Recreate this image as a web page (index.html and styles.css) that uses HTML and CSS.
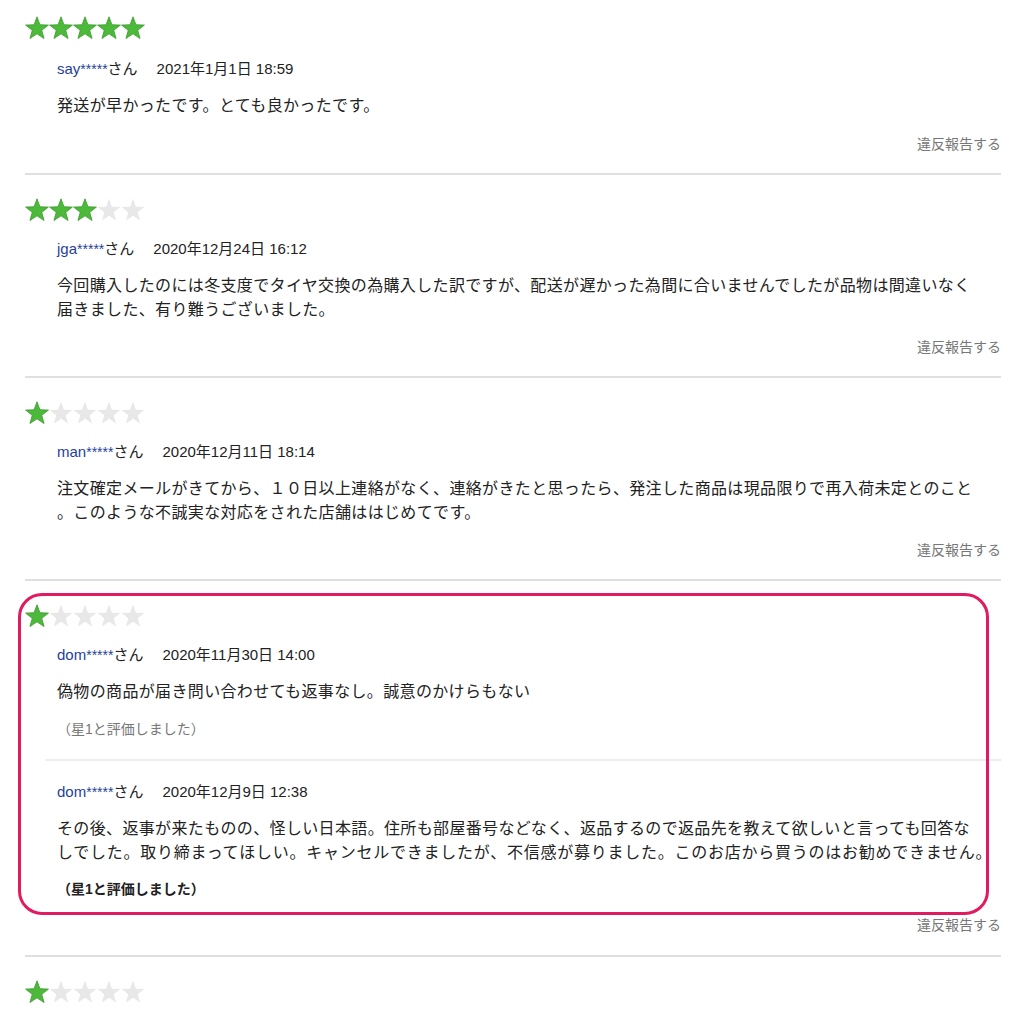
FILE: index.html
```html
<!DOCTYPE html>
<html lang="ja">
<head>
    <meta charset="UTF-8">
    <meta name="viewport" content="width=device-width, initial-scale=1.0">
    <title>レビュー</title>
    <link rel="stylesheet" href="styles.css">
</head>
<body>
    <svg class="sprite" xmlns="http://www.w3.org/2000/svg">
        <symbol id="star" viewBox="0 0 24 23">
            <polygon points="12,0.8 14.94,8.75 23.41,9.09 16.76,14.35 19.05,22.51 12,17.8 4.95,22.51 7.24,14.35 0.59,9.09 9.06,8.75"/>
        </symbol>
    </svg>

    <div class="reviews">
        <!-- review 1 -->
        <div class="review first">
            <div class="stars">
                <svg class="star on"><use href="#star"/></svg>
                <svg class="star on"><use href="#star"/></svg>
                <svg class="star on"><use href="#star"/></svg>
                <svg class="star on"><use href="#star"/></svg>
                <svg class="star on"><use href="#star"/></svg>
            </div>
            <div class="entry">
                <div class="meta"><span class="user">say<span class="mask">*****</span></span>さん<span class="date">2021年1月1日 18:59</span></div>
                <p class="body">発送が早かったです。とても良かったです。</p>
            </div>
            <div class="report">違反報告する</div>
        </div>

        <!-- review 2 -->
        <div class="review">
            <div class="stars">
                <svg class="star on"><use href="#star"/></svg>
                <svg class="star on"><use href="#star"/></svg>
                <svg class="star on"><use href="#star"/></svg>
                <svg class="star"><use href="#star"/></svg>
                <svg class="star"><use href="#star"/></svg>
            </div>
            <div class="entry">
                <div class="meta"><span class="user">jga<span class="mask">*****</span></span>さん<span class="date">2020年12月24日 16:12</span></div>
                <p class="body">今回購入したのには冬支度でタイヤ交換の為購入した訳ですが、配送が遅かった為間に合いませんでしたが品物は間違いなく<br>届きました、有り難うございました。</p>
            </div>
            <div class="report">違反報告する</div>
        </div>

        <!-- review 3 -->
        <div class="review">
            <div class="stars">
                <svg class="star on"><use href="#star"/></svg>
                <svg class="star"><use href="#star"/></svg>
                <svg class="star"><use href="#star"/></svg>
                <svg class="star"><use href="#star"/></svg>
                <svg class="star"><use href="#star"/></svg>
            </div>
            <div class="entry">
                <div class="meta"><span class="user">man<span class="mask">*****</span></span>さん<span class="date">2020年12月11日 18:14</span></div>
                <p class="body">注文確定メールがきてから、１０日以上連絡がなく、連絡がきたと思ったら、発注した商品は現品限りで再入荷未定とのこと<br>。このような不誠実な対応をされた店舗ははじめてです。</p>
            </div>
            <div class="report">違反報告する</div>
        </div>

        <!-- review 4, marked -->
        <div class="review marked">
            <div class="highlight"></div>
            <div class="stars">
                <svg class="star on"><use href="#star"/></svg>
                <svg class="star"><use href="#star"/></svg>
                <svg class="star"><use href="#star"/></svg>
                <svg class="star"><use href="#star"/></svg>
                <svg class="star"><use href="#star"/></svg>
            </div>
            <div class="entry">
                <div class="meta"><span class="user">dom<span class="mask">*****</span></span>さん<span class="date">2020年11月30日 14:00</span></div>
                <p class="body">偽物の商品が届き問い合わせても返事なし。誠意のかけらもない</p>
                <p class="note">（星1と評価しました）</p>
            </div>
            <div class="reply">
                <div class="meta"><span class="user">dom<span class="mask">*****</span></span>さん<span class="date">2020年12月9日 12:38</span></div>
                <p class="body">その後、返事が来たものの、怪しい日本語。住所も部屋番号などなく、返品するので返品先を教えて欲しいと言っても回答な<br><span class="loose">しでした。取り締まってほしい。キャンセルできましたが、不信感が募りました。このお店から買うのはお勧めできません。</span></p>
                <p class="note strong">（星1と評価しました）</p>
            </div>
            <div class="report">違反報告する</div>
        </div>

        <!-- review 5 -->
        <div class="review">
            <div class="stars">
                <svg class="star on"><use href="#star"/></svg>
                <svg class="star"><use href="#star"/></svg>
                <svg class="star"><use href="#star"/></svg>
                <svg class="star"><use href="#star"/></svg>
                <svg class="star"><use href="#star"/></svg>
            </div>
        </div>
    </div>
</body>
</html>
```

FILE: styles.css
```css
* {
    margin: 0;
    padding: 0;
    box-sizing: border-box;
}

body {
    background-color: #fff;
    color: #222;
    font-family: "Liberation Sans", "Noto Sans CJK JP", sans-serif;
}

.sprite {
    display: none;
}

.reviews {
    width: 976px;
    margin-left: 25px;
}

.review {
    padding: 23px 0 19px;
    border-bottom: 2px solid #e0e0e0;
}

.review:last-child {
    border-bottom: none;
}

.review.first {
    padding-top: 16px;
}

.review.first .meta {
    margin-top: 20px;
}

.review.first .report {
    margin-top: 16px;
}

.review.marked {
    position: relative;
    padding-bottom: 20px;
}

.review.marked > .report {
    margin-top: 16px;
}

/* the pink frame drawn over the 4th review */
.highlight {
    position: absolute;
    left: -7px;
    top: 12px;
    width: 971px;
    height: 322px;
    border: 3px solid #e11b5f;
    border-radius: 24px;
    pointer-events: none;
}

.stars {
    display: flex;
    height: 23px;
}

.star {
    width: 24px;
    height: 23px;
    fill: #e8e8e8;
}

.star.on {
    fill: #4cb93a;
    stroke: #3a9a2b;
    stroke-width: 0.8;
    stroke-linejoin: round;
}

.entry {
    padding-left: 32px;
}

.meta {
    margin-top: 18px;
    font-size: 15px;
    line-height: 20px;
    color: #222;
}

.user {
    color: #1f3f99;
}

.mask {
    font-size: 14px;
}

.date {
    margin-left: 19px;
}

.body {
    margin-top: 15px;
    font-size: 16px;
    letter-spacing: 0.35px;
    line-height: 24px;
    color: #222;
    white-space: nowrap;
}

.loose {
    letter-spacing: 0.75px;
}

.note {
    margin-top: 15px;
    font-size: 14px;
    line-height: 20px;
    color: #777;
}

.note.strong {
    margin-top: 14px;
    color: #222;
    font-weight: bold;
}

.reply {
    margin: 20px 0 0 20px;
    padding: 3px 0 0 12px;
    border-top: 2px solid #eee;
}

.report {
    margin-top: 15px;
    text-align: right;
    font-size: 14px;
    line-height: 20px;
    color: #777;
}
```
